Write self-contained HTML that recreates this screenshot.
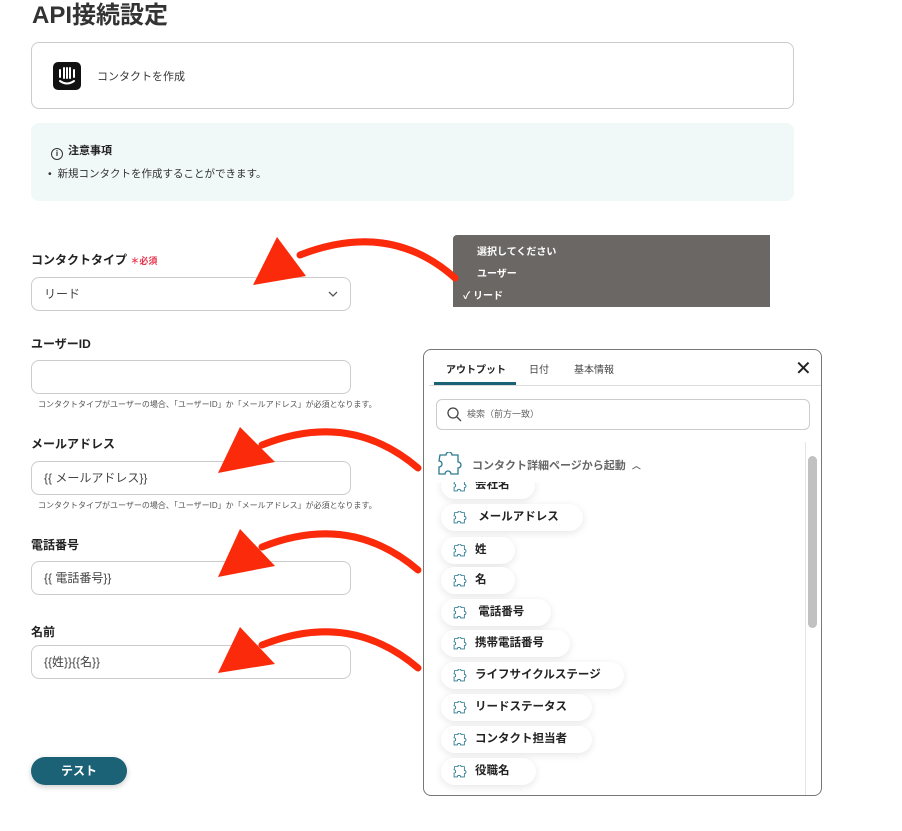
<!DOCTYPE html>
<html><head><meta charset="utf-8"><style>
*{box-sizing:border-box;margin:0;padding:0}
body{width:902px;height:831px;background:#fff;font-family:"Liberation Sans","Noto Sans CJK JP",sans-serif;color:#333;position:relative;overflow:hidden}
.a{position:absolute}
.inp{position:absolute;left:31px;width:320px;height:34px;border:1px solid #ccc;border-radius:8px;font-size:12px;padding:0 12px;line-height:32px;color:#444}
.lbl{position:absolute;left:31px;font-size:12px;font-weight:bold;color:#222}
.help{position:absolute;left:38px;font-size:8px;color:#555}
.pill{position:absolute;left:441px;height:27px;background:#fff;border-radius:14px;box-shadow:0 2px 8px rgba(0,0,0,.1);font-size:11.5px;font-weight:bold;color:#222;line-height:27px;padding-left:34px}
</style></head><body>
<div class="a" style="left:32px;top:1px;font-size:24px;font-weight:bold;color:#333;line-height:30px">API接続設定</div>
<div class="a" style="left:31px;top:42px;width:763px;height:67px;border:1px solid #ccc;border-radius:8px"></div>
<div class="a" style="left:53px;top:62px;width:28px;height:28px;background:#111;border-radius:5px">
<svg width="28" height="28" viewBox="0 0 28 28"><g stroke="#fff" stroke-width="2" stroke-linecap="round" fill="none"><path d="M7 8v7M11 6v10M14 6v10M17 6v10M21 8v7"/><path d="M7 19q7 5 14 0"/></g></svg></div>
<div class="a" style="left:97px;top:68px;font-size:11px;color:#333">コンタクトを作成</div>
<div class="a" style="left:31px;top:123px;width:763px;height:78px;background:#f1f8f8;border-radius:8px"></div>
<div class="a" style="left:51px;top:142px;font-size:11px;font-weight:bold;color:#222"><span style="display:inline-block;width:12px;height:12px;border:1px solid #333;border-radius:50%;font-size:8px;text-align:center;line-height:10px;vertical-align:-2px;margin-right:5px">i</span>注意事項</div>
<div class="a" style="left:48px;top:166px;font-size:10.5px;color:#333">•&nbsp; 新規コンタクトを作成することができます。</div>

<div class="lbl" style="top:251px">コンタクトタイプ <span style="color:#e8334a;font-size:9px">＊必須</span></div>
<div class="inp" style="top:277px">リード<svg style="position:absolute;right:12px;top:13px" width="10" height="7" viewBox="0 0 10 7"><path d="M1 1l4 4 4-4" fill="none" stroke="#555" stroke-width="1.3"/></svg></div>
<div class="lbl" style="top:335px">ユーザーID</div>
<div class="inp" style="top:360px"></div>
<div class="help" style="top:399px">コンタクトタイプがユーザーの場合、「ユーザーID」か「メールアドレス」が必須となります。</div>
<div class="lbl" style="top:435px">メールアドレス</div>
<div class="inp" style="top:461px">{{ メールアドレス}}</div>
<div class="help" style="top:500px">コンタクトタイプがユーザーの場合、「ユーザーID」か「メールアドレス」が必須となります。</div>
<div class="lbl" style="top:536px">電話番号</div>
<div class="inp" style="top:561px">{{ 電話番号}}</div>
<div class="lbl" style="top:623px">名前</div>
<div class="inp" style="top:645px">{{姓}}{{名}}</div>
<div class="a" style="left:31px;top:757px;width:96px;height:28px;background:#1b6277;border-radius:14px;color:#fff;font-size:12px;font-weight:bold;text-align:center;line-height:28px;box-shadow:0 2px 6px rgba(0,0,0,.2)">テスト</div>

<div class="a" style="left:453px;top:235px;width:317px;height:72px;background:#6a6765;border-radius:4px 0 0 0;color:#fff;font-size:10px;font-weight:bold">
<div class="a" style="left:24px;top:8px">選択してください</div>
<div class="a" style="left:24px;top:30px">ユーザー</div>
<div class="a" style="left:10px;top:52px">✓ リード</div>
</div>

<div class="a" style="left:423px;top:349px;width:399px;height:447px;border:1px solid #777;border-radius:8px;background:#fff;overflow:hidden">
<div class="a" style="left:22px;top:11px;font-size:10px;font-weight:bold;color:#222">アウトプット</div>
<div class="a" style="left:105px;top:11px;font-size:10px;color:#444">日付</div>
<div class="a" style="left:150px;top:11px;font-size:10px;color:#444">基本情報</div>
<div class="a" style="left:10px;top:32px;width:82px;height:3px;background:#1b6277"></div>
<div class="a" style="left:5px;top:35px;width:393px;height:1px;background:#ddd"></div>
<div class="a" style="left:371px;top:6px;font-size:20px;color:#222">✕</div>
<div class="a" style="left:12px;top:49px;width:374px;height:31px;border:1px solid #ccc;border-radius:6px;font-size:9px;color:#666;line-height:29px;padding-left:30px">検索（前方一致）
<svg class="a" style="left:10px;top:7px" width="15" height="15" viewBox="0 0 15 15"><circle cx="6" cy="6" r="5" fill="none" stroke="#444" stroke-width="1.3"/><path d="M10 10l4 4" stroke="#444" stroke-width="1.3"/></svg></div>
<div class="a" style="left:381px;top:92px;width:1px;height:360px;background:#e5e5e5"></div>
<div class="a" style="left:384px;top:106px;width:9px;height:172px;background:#c1c1c1;border-radius:5px"></div>
<svg class="a" style="left:12px;top:102px" width="26" height="24" viewBox="0 0 26 24"><path d="M4 3h6a3 3 0 0 1 6 0h6v7a3 3 0 0 1 0 6v6h-7a3 3 0 0 0-6 0H3v-7a3 3 0 0 0 0-6z" fill="none" stroke="#2a7a90" stroke-width="1.3"/></svg>
<div class="a" style="left:48px;top:107px;font-size:11px;font-weight:bold;color:#666">コンタクト詳細ページから起動 &nbsp;<span style="font-size:9px">︿</span></div>
</div>

<div style="position:absolute;left:423px;top:482px;width:380px;height:313px;overflow:hidden">
<div style="position:relative;left:-423px;top:-482px">
<div class="pill" style="top:472px;width:94px">会社名</div>
<div class="pill" style="top:504px;width:142px">&nbsp;メールアドレス</div>
<div class="pill" style="top:537px;width:74px">姓</div>
<div class="pill" style="top:567px;width:74px">名</div>
<div class="pill" style="top:599px;width:110px">&nbsp;電話番号</div>
<div class="pill" style="top:630px;width:129px">携帯電話番号</div>
<div class="pill" style="top:662px;width:183px">ライフサイクルステージ</div>
<div class="pill" style="top:694px;width:151px">リードステータス</div>
<div class="pill" style="top:726px;width:151px">コンタクト担当者</div>
<div class="pill" style="top:758px;width:95px">役職名</div>
</div></div>
<svg class="a" style="left:0;top:0" width="902" height="831">
<defs><symbol id="pz" viewBox="0 0 26 24"><path d="M4 3h6a3 3 0 0 1 6 0h6v7a3 3 0 0 1 0 6v6h-7a3 3 0 0 0-6 0H3v-7a3 3 0 0 0 0-6z" fill="none" stroke="#2a7a90" stroke-width="1.6"/></symbol>
<clipPath id="cp"><rect x="423" y="482" width="380" height="313"/></clipPath></defs>
<g clip-path="url(#cp)"><use href="#pz" x="452" y="479" width="15" height="13"/><use href="#pz" x="452" y="511" width="15" height="13"/><use href="#pz" x="452" y="544" width="15" height="13"/><use href="#pz" x="452" y="574" width="15" height="13"/><use href="#pz" x="452" y="606" width="15" height="13"/><use href="#pz" x="452" y="637" width="15" height="13"/><use href="#pz" x="452" y="669" width="15" height="13"/><use href="#pz" x="452" y="701" width="15" height="13"/><use href="#pz" x="452" y="733" width="15" height="13"/><use href="#pz" x="452" y="765" width="15" height="13"/></g>
<g fill="none" stroke="#fb2a0a" stroke-width="7" stroke-linecap="round">
<path d="M455 278Q390 220 300 255"/>
<path d="M418 468Q350 410 262 445"/>
<path d="M418 570Q350 512 262 547"/>
<path d="M418 668Q350 610 262 645"/>
</g>
<g fill="#fb2a0a">
<polygon points="277,237 306,276 253,285"/>
<polygon points="240,427 275,462 218,473"/>
<polygon points="240,529 275,566 218,577"/>
<polygon points="240,627 275,664 218,673"/>
</g>
</svg>
</body></html>
